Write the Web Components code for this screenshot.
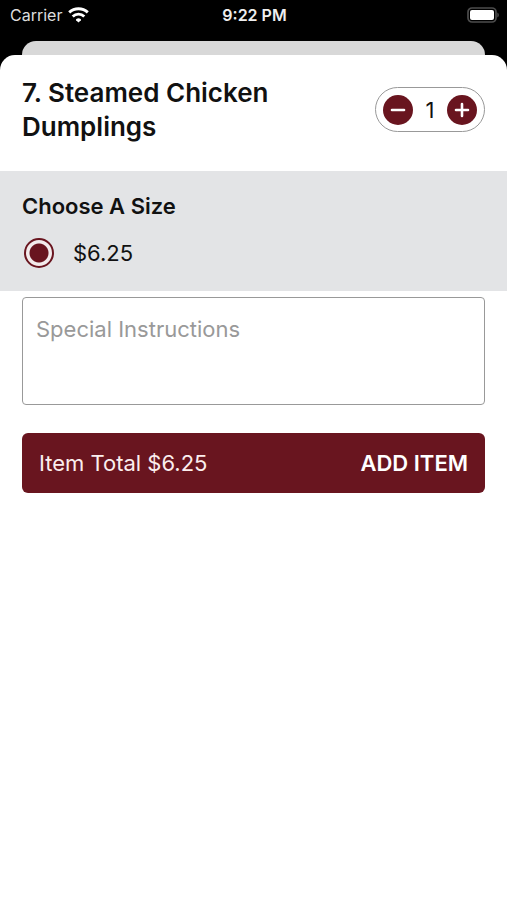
<!DOCTYPE html>
<html lang="en">
<head>
<meta charset="utf-8">
<meta name="viewport" content="width=device-width, initial-scale=1">
<title>Add item</title>
<style>
  html, body { height: 100%; margin: 0; }
  body {
    background: #000;
    color: #111;
    font-family: Inter, "Liberation Sans", sans-serif;
    --accent: #69151f;
    --line: #999;
    --gutter: 22px;
  }
</style>
</head>
<body>
<order-screen>
  <status-bar slot="status" carrier="Carrier" time="9:22 PM"></status-bar>
  <item-header>
    <span>7. Steamed Chicken Dumplings</span>
    <quantity-stepper slot="action" value="1"></quantity-stepper>
  </item-header>
  <size-picker heading="Choose A Size" price="$6.25"></size-picker>
  <special-instructions></special-instructions>
  <add-item-button><span slot="total">Item Total $6.25</span>ADD ITEM</add-item-button>
</order-screen>

<script>
  const define = (name, html, setup) => {
    const template = document.createElement('template');
    template.innerHTML = '<style>*{box-sizing:border-box}</style>' + html;
    customElements.define(name, class extends HTMLElement {
      constructor() {
        super();
        this.attachShadow({ mode: 'open' }).append(template.content.cloneNode(true));
      }
      connectedCallback() { if (setup) setup(this, this.shadowRoot); }
    });
  };

  define('order-screen', `
    <style>
      :host { display: flex; flex-direction: column; min-height: 100vh; background: #000; }
      .behind { height: 14px; margin: 11px var(--gutter) 0; background: #d8d8d8; border-radius: 14px 14px 0 0; }
      main { flex: 1; background: #fff; border-radius: 15px 15px 0 0; }
    </style>
    <slot name="status"></slot>
    <div class="behind"></div>
    <main><slot></slot></main>`);

  define('status-bar', `
    <style>
      :host { display: grid; grid-template-columns: 1fr auto 1fr; align-items: center; height: 30px; padding: 0 8px 0 10px; color: #ddd; font-size: 16px; line-height: 20px; }
      .left { display: flex; align-items: center; gap: 6px; }
      .time { font-weight: 600; color: #eee; }
      .battery { justify-self: end; }
      svg { display: block; }
    </style>
    <div class="left">
      <span class="carrier"></span>
      <svg width="21" height="16" viewBox="0 0 21 16" fill="none" stroke="#fff" stroke-width="2.9" aria-label="Wi-Fi">
        <path d="M1.2 5.4C6.5 .5 14.5 .5 19.8 5.4"/>
        <path d="M4.7 9.5C8 6.3 13 6.3 16.3 9.5"/>
        <path d="M10.5 15.4 8.1 13.3Q7.6 12.6 8.4 11.9Q10.5 10.5 12.6 11.9Q13.4 12.6 12.9 13.3Z" fill="#fff" stroke="none"/>
      </svg>
    </div>
    <span class="time"></span>
    <svg class="battery" width="32" height="16" viewBox="0 0 32 16" aria-label="Battery full">
      <rect x="1" y="1" width="28" height="14" rx="4" fill="none" stroke="#4c4c4c" stroke-width="1.7"/>
      <rect x="3" y="3" width="24" height="10" rx="2" fill="#fff"/>
      <path d="M30.4 5.6v4.8q1.4-.8 1.4-2.4T30.4 5.6Z" fill="#555"/>
    </svg>`, (host, root) => {
      root.querySelector('.carrier').textContent = host.getAttribute('carrier');
      root.querySelector('.time').textContent = host.getAttribute('time');
    });

  define('item-header', `
    <style>
      :host { display: flex; align-items: flex-start; justify-content: space-between; gap: 48px; padding: 21px var(--gutter) 27px; }
      h1 { flex: 1; max-width: 300px; margin: 0; font-size: 26px; line-height: 34px; font-weight: 600; }
      ::slotted([slot=action]) { margin-top: 11px; }
    </style>
    <h1><slot></slot></h1>
    <slot name="action"></slot>`);

  define('quantity-stepper', `
    <style>
      :host { display: flex; align-items: center; justify-content: space-between; width: 110px; height: 45px; padding: 0 7px; border: 1px solid var(--line); border-radius: 23px; box-sizing: border-box; }
      button { display: grid; place-items: center; width: 30px; height: 30px; padding: 0; border: 0; border-radius: 50%; background: var(--accent); }
      output { font-size: 22px; line-height: 30px; }
    </style>
    <button type="button" class="less" aria-label="Decrease quantity"><svg width="16" height="16" viewBox="0 0 16 16" stroke="#fff" stroke-width="2.6" stroke-linecap="round"><path d="M2 8h12"/></svg></button>
    <output aria-label="Quantity"></output>
    <button type="button" class="more" aria-label="Increase quantity"><svg width="16" height="16" viewBox="0 0 16 16" stroke="#fff" stroke-width="2.6" stroke-linecap="round"><path d="M2 8h12M8 2v12"/></svg></button>`,
    (host, root) => {
      const output = root.querySelector('output');
      let value = Number(host.getAttribute('value'));
      const step = d => { value = Math.max(1, value + d); output.textContent = value; };
      root.querySelector('.less').onclick = () => step(-1);
      root.querySelector('.more').onclick = () => step(1);
      step(0);
    });

  define('size-picker', `
    <style>
      :host { display: block; background: #e3e4e6; padding: 20px var(--gutter) 23px; }
      fieldset { margin: 0; padding: 0; border: 0; min-width: 0; }
      legend { padding: 0; margin-bottom: 17px; font-size: 22px; line-height: 30px; font-weight: 600; }
      label { display: flex; align-items: center; gap: 19px; padding-left: 2px; font-size: 22px; line-height: 30px; }
      input { appearance: none; width: 30px; height: 30px; margin: 0; border: 2px solid var(--accent); border-radius: 50%; background: #f3ebec; }
      input:checked { background: radial-gradient(circle, var(--accent) 9px, #f3ebec 10px); }
    </style>
    <fieldset>
      <legend></legend>
      <label for="size"><input id="size" type="radio" name="size" checked><span></span></label>
    </fieldset>`, (host, root) => {
      root.querySelector('legend').textContent = host.getAttribute('heading');
      root.querySelector('span').textContent = host.getAttribute('price');
    });

  define('special-instructions', `
    <style>
      :host { display: block; padding: 6px var(--gutter) 0; }
      textarea { display: block; width: 100%; height: 108px; padding: 16px 13px; border: 1px solid var(--line); border-radius: 4px; background: #fff; color: inherit; font: 22px/30px Inter, "Liberation Sans", sans-serif; resize: none; }
      textarea::placeholder { color: #999; opacity: 1; }
    </style>
    <textarea aria-label="Special Instructions" placeholder="Special Instructions"></textarea>`);

  define('add-item-button', `
    <style>
      :host { display: block; padding: 28px var(--gutter); }
      button { display: flex; align-items: center; justify-content: space-between; width: 100%; height: 60px; padding: 0 17px; border: 0; border-radius: 6px; background: var(--accent); color: #fbeeee; font: 22px/30px Inter, "Liberation Sans", sans-serif; }
      .label { font-weight: 600; color: #fff; }
    </style>
    <button type="button"><slot name="total"></slot><span class="label"><slot></slot></span></button>`);
</script>
</body>
</html>
